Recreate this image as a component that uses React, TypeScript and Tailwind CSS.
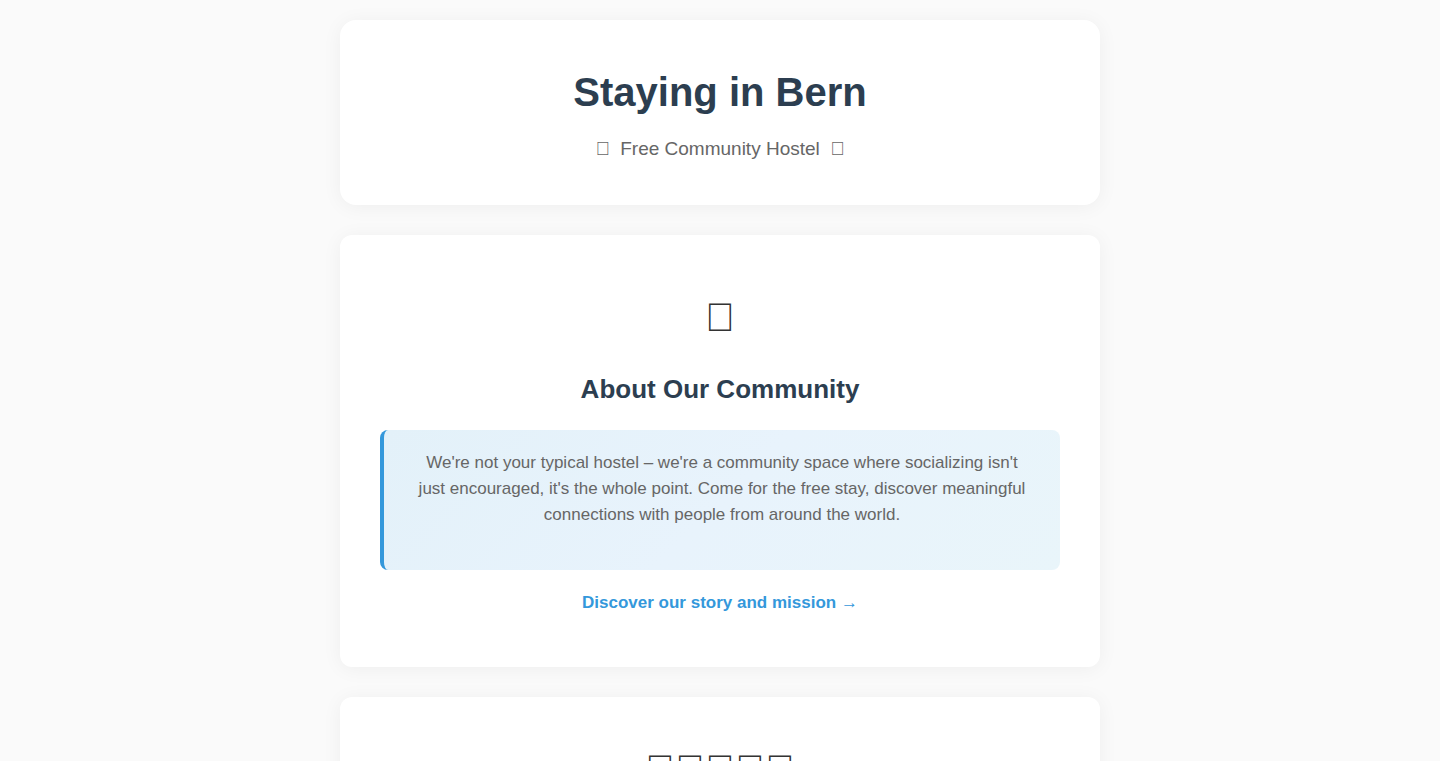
import type { ReactNode } from "react";
import clsx from "clsx";

// icon font codepoints
const HOUSE = "\uE900";
const STAR = "\uE901";

interface CardProps {
  icon: string;
  className?: string;
  children?: ReactNode;
}

function Card({ icon, className, children }: CardProps) {
  return (
    <section
      className={clsx(
        "rounded-xl bg-white px-10 text-center shadow-[0_2px_20px_rgba(0,0,0,0.05)]",
        className
      )}>
      <div className="mb-5 text-[40px] leading-[64px]">{icon}</div>
      {children}
    </section>
  );
}

export default function App() {
  return (
    <div className="min-h-screen bg-[#fafafa] font-['Liberation_Sans',Arial,sans-serif] text-[#333]">
      <main className="mx-auto flex max-w-[800px] flex-col gap-[30px] p-5">
        {/* Header */}
        <header className="rounded-2xl bg-white px-5 pt-10 pb-[41px] text-center shadow-[0_2px_20px_rgba(0,0,0,0.05)]">
          <h1 className="mb-2.5 text-[40px] leading-[64px] font-bold text-[#2c3e50]">
            Staying in Bern
          </h1>
          <p className="text-[19px] leading-[30px] text-[#666]">
            {HOUSE}&nbsp; Free Community Hostel &nbsp;{HOUSE}
          </p>
        </header>

        {/* About */}
        <Card icon={STAR} className="pt-[50px] pb-[51px]">
          <h2 className="mb-5 text-[26px] leading-[41px] font-bold text-[#2c3e50]">
            About Our Community
          </h2>
          <div className="mb-5 rounded-lg border-l-4 border-[#3498db] bg-linear-135 from-[#e3f1f9] via-[#e8f3fc] to-[#e9f5fa] px-[30px] pt-5 pb-[42px]">
            <p className="text-[17px] leading-[26px] text-[#666]">
              We're not your typical hostel – we're a community space where
              socializing isn't just encouraged, it's the whole point. Come for
              the free stay, discover meaningful connections with people from
              around the world.
            </p>
          </div>
          <a
            href="#about"
            className="block text-[17px] leading-[26px] font-bold text-[#3498db]">
            Discover our story and mission →
          </a>
        </Card>

        {/* Reviews */}
        <Card icon={STAR.repeat(5)} className="py-10" />
      </main>
    </div>
  );
}
